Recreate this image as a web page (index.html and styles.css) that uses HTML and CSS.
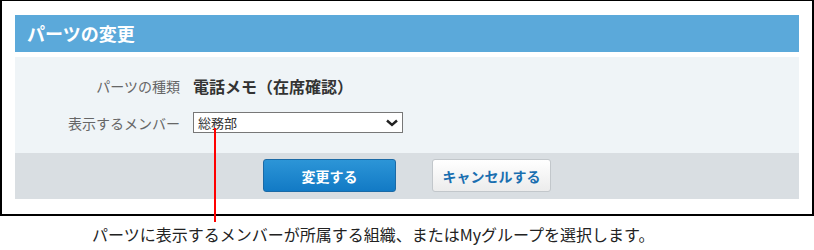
FILE: index.html
```html
<!DOCTYPE html>
<html lang="ja">
<head>
  <meta charset="UTF-8">
  <title>パーツの変更</title>
  <link rel="stylesheet" href="styles.css">
</head>
<body>
  <div class="frame">
    <div class="title-bar">パーツの変更</div>

    <div class="form-panel">
      <div class="form-label">パーツの種類</div>
      <div class="form-value">電話メモ（在席確認）</div>

      <div class="form-label">表示するメンバー</div>
      <div class="select-box">
        <span class="select-text">総務部</span>
        <svg class="select-arrow" width="12" height="8" viewBox="0 0 12 8">
          <path d="M1 1.5 L6 6 L11 1.5" fill="none" stroke="#222" stroke-width="2.4"/>
        </svg>
      </div>
    </div>

    <div class="button-bar">
      <button class="btn btn-primary">変更する</button>
      <button class="btn btn-cancel">キャンセルする</button>
    </div>

    <div class="pointer-line"></div>
  </div>

  <p class="caption">パーツに表示するメンバーが所属する組織、またはMyグループを選択します。</p>
</body>
</html>
```

FILE: styles.css
```css
body {
  margin: 0;
  padding: 0;
  font-family: "Noto Sans CJK JP", "Noto Sans", sans-serif;
  background-color: #ffffff;
}

.frame {
  position: relative;
  box-sizing: border-box;
  width: 814px;
  height: 216px;
  padding: 14px 13px 0 13px;
  border: 2px solid #000000;
  border-top-width: 1px;
}

.title-bar {
  height: 37px;
  line-height: 37px;
  padding-left: 12px;
  background-color: #5ba9da;
  color: #ffffff;
  font-size: 18px;
  font-weight: bold;
  margin-bottom: 5px;
}

.form-panel {
  display: grid;
  grid-template-columns: 165px 1fr;
  grid-template-rows: 20px 21px;
  column-gap: 13px;
  row-gap: 16px;
  align-items: center;
  height: 96px;
  box-sizing: border-box;
  padding-top: 19px;
  background-color: #eff4f7;
}

.form-label {
  text-align: right;
  font-size: 14px;
  color: #666666;
}

.form-value {
  font-size: 16px;
  font-weight: bold;
  color: #333333;
}

.select-box {
  position: relative;
  box-sizing: border-box;
  width: 210px;
  height: 21px;
  border: 1px solid #777777;
  background-color: #ffffff;
  padding-left: 4px;
  font-size: 13px;
  line-height: 19px;
  color: #333333;
}

.select-arrow {
  position: absolute;
  right: 4px;
  top: 6px;
}

.button-bar {
  display: flex;
  justify-content: center;
  gap: 36px;
  height: 46px;
  box-sizing: border-box;
  padding-top: 6px;
  background-color: #d9dee2;
}

.btn {
  height: 33px;
  border-radius: 3px;
  font-family: inherit;
  font-size: 14px;
  font-weight: bold;
  cursor: pointer;
}

.btn-primary {
  width: 133px;
  border: 1px solid #1b6aa6;
  background: linear-gradient(#2c95d7, #127ac5);
  color: #ffffff;
}

.btn-cancel {
  width: 119px;
  border: 1px solid #c2c7cb;
  background: linear-gradient(#ffffff, #ececec);
  color: #1a6fb0;
}

.pointer-line {
  position: absolute;
  left: 212px;
  top: 127px;
  width: 2px;
  height: 94px;
  background-color: #ff0000;
}

.caption {
  margin: 6px 0 0 92px;
  font-size: 16px;
  color: #222222;
}
```
